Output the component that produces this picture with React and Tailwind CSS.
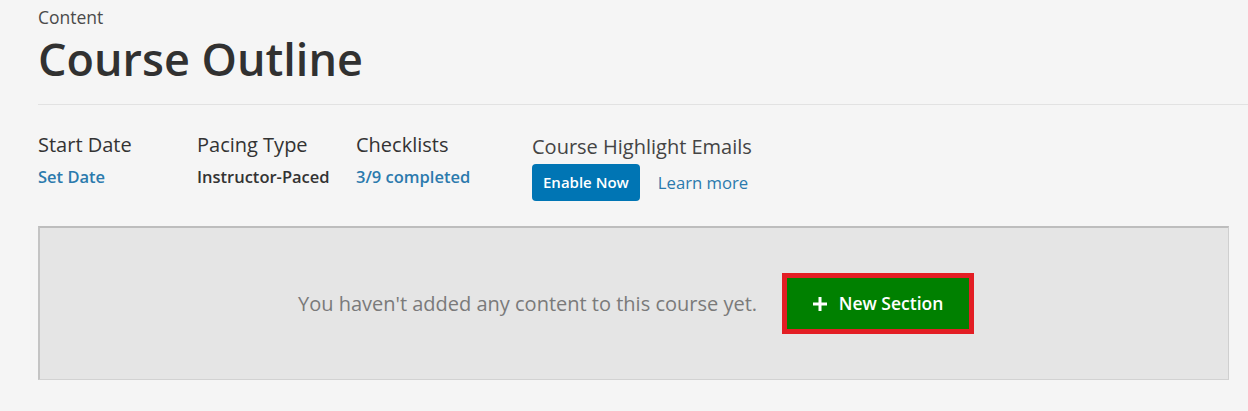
export default function App() {
  return (
    <div className="min-h-[411px] bg-[#f5f5f5] font-['Open_Sans',sans-serif] text-[#333]">
      <div className="pl-[38px]">
        <div className="pt-[6px] text-[17.5px] leading-[22px] text-[#4a4a4a]">Content</div>
        <h1 className="mt-[1px] text-[45px] font-semibold leading-[60px] text-[#313131]">Course Outline</h1>
        <div className="mt-[15px] h-[1px] bg-[#e2e2e2]" />
      </div>

      <div className="flex items-start pl-[38px] pt-[28px]">
        <div className="w-[159px]">
          <div className="text-[20px] leading-[24px]">Start Date</div>
          <div className="mt-[10px] text-[16.5px] font-semibold leading-[20px] text-[#2b7aad]">Set Date</div>
        </div>
        <div className="w-[159px]">
          <div className="text-[20px] leading-[24px]">Pacing Type</div>
          <div className="mt-[10px] text-[16.5px] font-semibold leading-[20px] text-[#333]">Instructor-Paced</div>
        </div>
        <div className="w-[176px]">
          <div className="text-[20px] leading-[24px]">Checklists</div>
          <div className="mt-[10px] text-[16.5px] font-semibold leading-[20px] text-[#2b7aad]">3/9 completed</div>
        </div>
        <div className="pt-[2px]">
          <div className="text-[20px] leading-[24px] text-[#444]">Course Highlight Emails</div>
          <div className="mt-[5px] flex items-center gap-[18px]">
            <button className="h-[37px] rounded-[4px] bg-[#0075b4] px-[11px] text-[15px] font-semibold text-white">
              Enable Now
            </button>
            <span className="text-[16.7px] text-[#2b7aad]">Learn more</span>
          </div>
        </div>
      </div>

      <div className="pl-[38px] pr-[19px] pt-[25px] pb-[30px]">
        <div className="flex h-[154px] items-center justify-center gap-[25px] border-t-2 border-l-2 border-r border-b border-t-[#bdbdbd] border-l-[#c4c4c4] border-r-[#cfcfcf] border-b-[#d2d2d2] bg-[#e5e5e5] pl-[4px]">
          <span className="text-[20px] text-[#7a7a7a]">You haven't added any content to this course yet.</span>
          <div className="border-[5px] border-[#e31e24]">
            <button className="flex h-[51px] w-[182px] items-center justify-center gap-[12px] bg-[#008000] text-[17.5px] font-semibold text-white">
              <svg width="14" height="14" viewBox="0 0 14 14">
                <path d="M5.5 0h3v5.5H14v3H8.5V14h-3V8.5H0v-3h5.5z" fill="white" />
              </svg>
              New Section
            </button>
          </div>
        </div>
      </div>
    </div>
  );
}
